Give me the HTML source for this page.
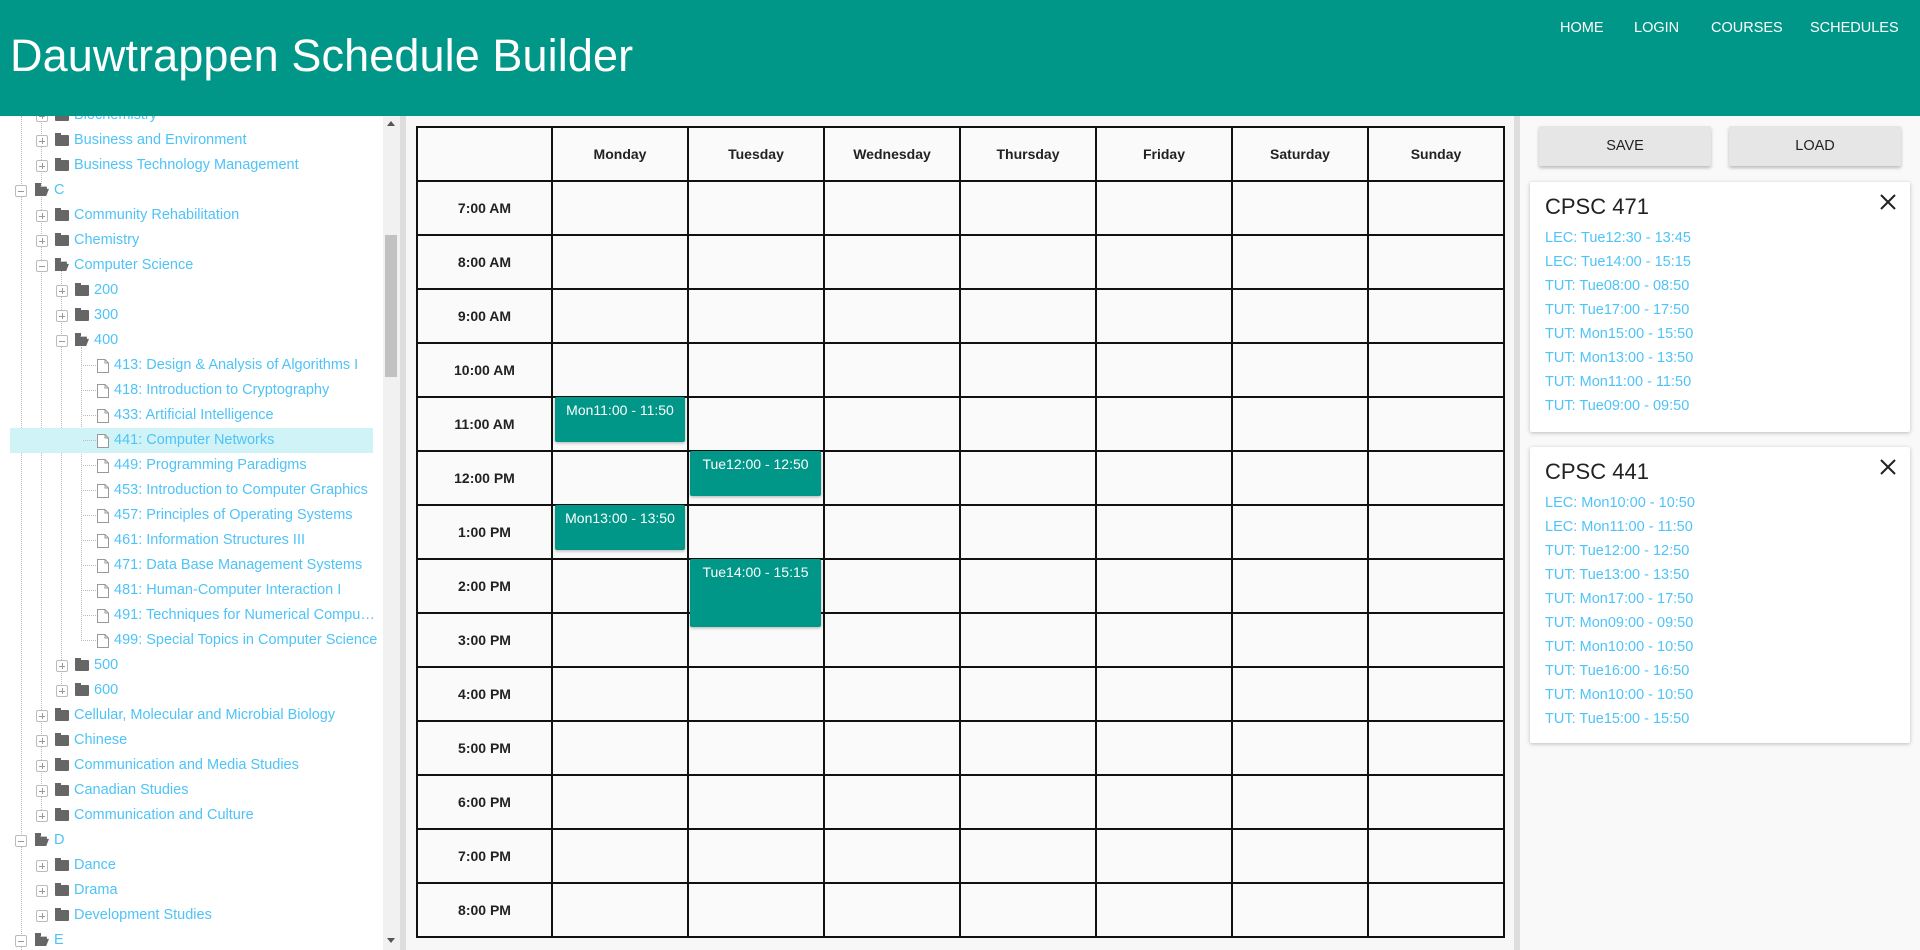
<!DOCTYPE html>
<html><head><meta charset="utf-8">
<style>
*{box-sizing:border-box;margin:0;padding:0}
body{width:1920px;height:950px;overflow:hidden;font-family:"Liberation Sans",sans-serif;background:#fafafa;position:relative}
.hdr{position:absolute;left:0;top:0;width:1920px;height:116px;background:#009688;z-index:5}
.hdr h1{position:absolute;left:10px;top:30px;font-weight:400;font-size:45px;color:#fff;letter-spacing:0.1px}
.nav a{position:absolute;top:20px;color:#fff;font-size:14.5px;text-decoration:none}
.side{position:absolute;left:0;top:116px;width:400px;height:834px;background:#fff;overflow:hidden}
.sb{position:absolute;left:383px;top:116px;width:17px;height:834px;background:#f1f1f1}
.thumb{position:absolute;left:385px;top:235px;width:12px;height:142px;background:#c1c1c1}
.row{position:absolute;height:25px;line-height:25px;font-size:14.5px;color:#4fc3f7;white-space:nowrap}
.exp{position:absolute;top:7px;width:12px;height:12px;border:1px solid #bbb;border-radius:2px;background:#fff}
.exp:before{content:"";position:absolute;left:2px;top:4.5px;width:6px;height:1px;background:#999}
.exp.p:after{content:"";position:absolute;left:4.5px;top:2px;width:1px;height:6px;background:#999}
.fold{position:absolute;top:7px;width:14px;height:11px;background:#666;border-radius:1px}
.fold:before{content:"";position:absolute;left:0;top:-2px;width:6px;height:3px;background:#666}
.fold.o{background:none}
.fold.o:after{content:"";position:absolute;left:0;top:0;width:14px;height:11px;background:#666;clip-path:polygon(0 0,40% 0,40% 15%,85% 15%,85% 35%,25% 35%,0 100%,0 0,25% 35%,100% 35%,80% 100%,0 100%)}
.file{position:absolute;top:6px;width:12px;height:14px}
.vl{position:absolute;border-left:1px dotted #bbb;width:0}
.hl{position:absolute;border-top:1px dotted #bbb;height:0;width:13px}
.div1{position:absolute;left:400px;top:116px;width:6px;height:834px;background:#ddd}
.div2{position:absolute;left:1514px;top:116px;width:6px;height:834px;background:#ddd}
.main{position:absolute;left:406px;top:116px;width:1108px;height:834px;background:#f7f7f7}
table{position:absolute;left:416px;top:126px;border-collapse:collapse;background:#fafafa}
td{border:2px solid #111;width:136px;height:54px;text-align:center;font-weight:bold;font-size:14px;color:#222}
td.t{width:135px}
.ev{position:absolute;background:#009688;color:#fff;font-size:14px;text-align:center;padding-top:5px;border-radius:2px;box-shadow:0 1px 3px rgba(0,0,0,.3)}
.rp{position:absolute;left:1520px;top:116px;width:400px;height:834px;background:#f9f9f9}
.btn{position:absolute;top:126px;width:172px;height:40px;background:#e6e6e6;border-radius:2px;box-shadow:0 2px 3px rgba(0,0,0,.25);text-align:center;line-height:40px;font-size:14.5px;color:#222}
.card{position:absolute;left:1530px;width:380px;background:#fff;box-shadow:0 1px 4px rgba(0,0,0,.25);border-radius:2px}
.card h2{position:absolute;left:15px;top:12px;font-weight:400;font-size:22px;color:#222}
.card .x{position:absolute;right:14px;top:12px;width:16px;height:16px}
.card .l{position:absolute;left:15px;font-size:14.5px;color:#4fc3f7}
</style></head><body>
<svg width="0" height="0" style="position:absolute"><defs><symbol id="fi" viewBox="0 0 12 14"><path d="M0.5 0.5H8L11.5 4V13.5H0.5Z M8 0.5V4H11.5" fill="#fff" stroke="#999" stroke-width="1"/></symbol><symbol id="fx" viewBox="0 0 16 16"><path d="M1 1L15 15M15 1L1 15" stroke="#222" stroke-width="2"/></symbol></defs></svg>
<div class="hdr"><h1>Dauwtrappen Schedule Builder</h1>
<div class="nav"><a style="left:1560px">HOME</a><a style="left:1634px">LOGIN</a><a style="left:1711px">COURSES</a><a style="left:1810px">SCHEDULES</a></div></div>

<div class="side">
<div class="vl" style="left:21px;top:0;height:834px"></div>
<div class="vl" style="left:41px;top:0;height:700px"></div>
<div class="vl" style="left:61px;top:155px;height:419px"></div>
<div class="vl" style="left:81px;top:231px;height:294px"></div>
<div style="position:absolute;left:10px;top:312px;width:363px;height:25px;background:#d0f3f8"></div>
</div>
<div id="tree" style="position:absolute;left:0;top:0;width:383px;height:950px;overflow:hidden;z-index:1">
<div class="row" style="top:103px"><span class="exp p" style="left:36px"></span><span class="fold" style="left:55px"></span><span style="position:absolute;left:74px">Biochemistry</span></div>
<div class="row" style="top:128px"><span class="exp p" style="left:36px"></span><span class="fold" style="left:55px"></span><span style="position:absolute;left:74px">Business and Environment</span></div>
<div class="row" style="top:153px"><span class="exp p" style="left:36px"></span><span class="fold" style="left:55px"></span><span style="position:absolute;left:74px">Business Technology Management</span></div>
<div class="row" style="top:178px"><span class="exp" style="left:15px"></span><span class="fold o" style="left:35px"></span><span style="position:absolute;left:54px">C</span></div>
<div class="row" style="top:203px"><span class="exp p" style="left:36px"></span><span class="fold" style="left:55px"></span><span style="position:absolute;left:74px">Community Rehabilitation</span></div>
<div class="row" style="top:228px"><span class="exp p" style="left:36px"></span><span class="fold" style="left:55px"></span><span style="position:absolute;left:74px">Chemistry</span></div>
<div class="row" style="top:253px"><span class="exp" style="left:36px"></span><span class="fold o" style="left:55px"></span><span style="position:absolute;left:74px">Computer Science</span></div>
<div class="row" style="top:278px"><span class="exp p" style="left:56px"></span><span class="fold" style="left:75px"></span><span style="position:absolute;left:94px">200</span></div>
<div class="row" style="top:303px"><span class="exp p" style="left:56px"></span><span class="fold" style="left:75px"></span><span style="position:absolute;left:94px">300</span></div>
<div class="row" style="top:328px"><span class="exp" style="left:56px"></span><span class="fold o" style="left:75px"></span><span style="position:absolute;left:94px">400</span></div>
<div class="row" style="top:353px"><span class="hl" style="left:83px;top:12px"></span><svg class="file" style="left:97px"><use href="#fi"/></svg><span style="position:absolute;left:114px">413: Design &amp; Analysis of Algorithms I</span></div>
<div class="row" style="top:378px"><span class="hl" style="left:83px;top:12px"></span><svg class="file" style="left:97px"><use href="#fi"/></svg><span style="position:absolute;left:114px">418: Introduction to Cryptography</span></div>
<div class="row" style="top:403px"><span class="hl" style="left:83px;top:12px"></span><svg class="file" style="left:97px"><use href="#fi"/></svg><span style="position:absolute;left:114px">433: Artificial Intelligence</span></div>
<div class="row" style="top:428px"><span class="hl" style="left:83px;top:12px"></span><svg class="file" style="left:97px"><use href="#fi"/></svg><span style="position:absolute;left:114px">441: Computer Networks</span></div>
<div class="row" style="top:453px"><span class="hl" style="left:83px;top:12px"></span><svg class="file" style="left:97px"><use href="#fi"/></svg><span style="position:absolute;left:114px">449: Programming Paradigms</span></div>
<div class="row" style="top:478px"><span class="hl" style="left:83px;top:12px"></span><svg class="file" style="left:97px"><use href="#fi"/></svg><span style="position:absolute;left:114px">453: Introduction to Computer Graphics</span></div>
<div class="row" style="top:503px"><span class="hl" style="left:83px;top:12px"></span><svg class="file" style="left:97px"><use href="#fi"/></svg><span style="position:absolute;left:114px">457: Principles of Operating Systems</span></div>
<div class="row" style="top:528px"><span class="hl" style="left:83px;top:12px"></span><svg class="file" style="left:97px"><use href="#fi"/></svg><span style="position:absolute;left:114px">461: Information Structures III</span></div>
<div class="row" style="top:553px"><span class="hl" style="left:83px;top:12px"></span><svg class="file" style="left:97px"><use href="#fi"/></svg><span style="position:absolute;left:114px">471: Data Base Management Systems</span></div>
<div class="row" style="top:578px"><span class="hl" style="left:83px;top:12px"></span><svg class="file" style="left:97px"><use href="#fi"/></svg><span style="position:absolute;left:114px">481: Human-Computer Interaction I</span></div>
<div class="row" style="top:603px"><span class="hl" style="left:83px;top:12px"></span><svg class="file" style="left:97px"><use href="#fi"/></svg><span style="position:absolute;left:114px">491: Techniques for Numerical Compu…</span></div>
<div class="row" style="top:628px"><span class="hl" style="left:83px;top:12px"></span><svg class="file" style="left:97px"><use href="#fi"/></svg><span style="position:absolute;left:114px">499: Special Topics in Computer Science</span></div>
<div class="row" style="top:653px"><span class="exp p" style="left:56px"></span><span class="fold" style="left:75px"></span><span style="position:absolute;left:94px">500</span></div>
<div class="row" style="top:678px"><span class="exp p" style="left:56px"></span><span class="fold" style="left:75px"></span><span style="position:absolute;left:94px">600</span></div>
<div class="row" style="top:703px"><span class="exp p" style="left:36px"></span><span class="fold" style="left:55px"></span><span style="position:absolute;left:74px">Cellular, Molecular and Microbial Biology</span></div>
<div class="row" style="top:728px"><span class="exp p" style="left:36px"></span><span class="fold" style="left:55px"></span><span style="position:absolute;left:74px">Chinese</span></div>
<div class="row" style="top:753px"><span class="exp p" style="left:36px"></span><span class="fold" style="left:55px"></span><span style="position:absolute;left:74px">Communication and Media Studies</span></div>
<div class="row" style="top:778px"><span class="exp p" style="left:36px"></span><span class="fold" style="left:55px"></span><span style="position:absolute;left:74px">Canadian Studies</span></div>
<div class="row" style="top:803px"><span class="exp p" style="left:36px"></span><span class="fold" style="left:55px"></span><span style="position:absolute;left:74px">Communication and Culture</span></div>
<div class="row" style="top:828px"><span class="exp" style="left:15px"></span><span class="fold o" style="left:35px"></span><span style="position:absolute;left:54px">D</span></div>
<div class="row" style="top:853px"><span class="exp p" style="left:36px"></span><span class="fold" style="left:55px"></span><span style="position:absolute;left:74px">Dance</span></div>
<div class="row" style="top:878px"><span class="exp p" style="left:36px"></span><span class="fold" style="left:55px"></span><span style="position:absolute;left:74px">Drama</span></div>
<div class="row" style="top:903px"><span class="exp p" style="left:36px"></span><span class="fold" style="left:55px"></span><span style="position:absolute;left:74px">Development Studies</span></div>
<div class="row" style="top:928px"><span class="exp" style="left:15px"></span><span class="fold o" style="left:35px"></span><span style="position:absolute;left:54px">E</span></div>
</div>
<div class="sb" style="z-index:2"></div><div class="thumb" style="z-index:2"></div>
<div style="position:absolute;left:387px;top:121px;width:0;height:0;border-left:4px solid transparent;border-right:4px solid transparent;border-bottom:5px solid #555;z-index:2"></div>
<div style="position:absolute;left:387px;top:938px;width:0;height:0;border-left:4px solid transparent;border-right:4px solid transparent;border-top:5px solid #555;z-index:2"></div>

<div class="div1"></div><div class="main"></div>
<table>
<tr><td class="t"></td><td>Monday</td><td>Tuesday</td><td>Wednesday</td><td>Thursday</td><td>Friday</td><td>Saturday</td><td>Sunday</td></tr>
<tr><td class="t">7:00 AM</td><td></td><td></td><td></td><td></td><td></td><td></td><td></td></tr>
<tr><td class="t">8:00 AM</td><td></td><td></td><td></td><td></td><td></td><td></td><td></td></tr>
<tr><td class="t">9:00 AM</td><td></td><td></td><td></td><td></td><td></td><td></td><td></td></tr>
<tr><td class="t">10:00 AM</td><td></td><td></td><td></td><td></td><td></td><td></td><td></td></tr>
<tr><td class="t">11:00 AM</td><td></td><td></td><td></td><td></td><td></td><td></td><td></td></tr>
<tr><td class="t">12:00 PM</td><td></td><td></td><td></td><td></td><td></td><td></td><td></td></tr>
<tr><td class="t">1:00 PM</td><td></td><td></td><td></td><td></td><td></td><td></td><td></td></tr>
<tr><td class="t">2:00 PM</td><td></td><td></td><td></td><td></td><td></td><td></td><td></td></tr>
<tr><td class="t">3:00 PM</td><td></td><td></td><td></td><td></td><td></td><td></td><td></td></tr>
<tr><td class="t">4:00 PM</td><td></td><td></td><td></td><td></td><td></td><td></td><td></td></tr>
<tr><td class="t">5:00 PM</td><td></td><td></td><td></td><td></td><td></td><td></td><td></td></tr>
<tr><td class="t">6:00 PM</td><td></td><td></td><td></td><td></td><td></td><td></td><td></td></tr>
<tr><td class="t">7:00 PM</td><td></td><td></td><td></td><td></td><td></td><td></td><td></td></tr>
<tr><td class="t">8:00 PM</td><td></td><td></td><td></td><td></td><td></td><td></td><td></td></tr>
</table>
<div class="ev" style="left:555px;top:397px;width:130px;height:45px">Mon11:00 - 11:50</div>
<div class="ev" style="left:555px;top:505px;width:130px;height:45px">Mon13:00 - 13:50</div>
<div class="ev" style="left:690px;top:451px;width:131px;height:45px">Tue12:00 - 12:50</div>
<div class="ev" style="left:690px;top:559px;width:131px;height:68px">Tue14:00 - 15:15</div>

<div class="div2"></div><div class="rp"></div>
<div class="btn" style="left:1539px">SAVE</div>
<div class="btn" style="left:1729px">LOAD</div>
<div class="card" style="top:182px;height:250px"><h2>CPSC 471</h2><svg class="x"><use href="#fx"/></svg>
<span class="l" style="top:48px">LEC: Tue12:30 - 13:45</span>
<span class="l" style="top:72px">LEC: Tue14:00 - 15:15</span>
<span class="l" style="top:96px">TUT: Tue08:00 - 08:50</span>
<span class="l" style="top:120px">TUT: Tue17:00 - 17:50</span>
<span class="l" style="top:144px">TUT: Mon15:00 - 15:50</span>
<span class="l" style="top:168px">TUT: Mon13:00 - 13:50</span>
<span class="l" style="top:192px">TUT: Mon11:00 - 11:50</span>
<span class="l" style="top:216px">TUT: Tue09:00 - 09:50</span>
</div>
<div class="card" style="top:447px;height:296px"><h2>CPSC 441</h2><svg class="x"><use href="#fx"/></svg>
<span class="l" style="top:48px">LEC: Mon10:00 - 10:50</span>
<span class="l" style="top:72px">LEC: Mon11:00 - 11:50</span>
<span class="l" style="top:96px">TUT: Tue12:00 - 12:50</span>
<span class="l" style="top:120px">TUT: Tue13:00 - 13:50</span>
<span class="l" style="top:144px">TUT: Mon17:00 - 17:50</span>
<span class="l" style="top:168px">TUT: Mon09:00 - 09:50</span>
<span class="l" style="top:192px">TUT: Mon10:00 - 10:50</span>
<span class="l" style="top:216px">TUT: Tue16:00 - 16:50</span>
<span class="l" style="top:240px">TUT: Mon10:00 - 10:50</span>
<span class="l" style="top:264px">TUT: Tue15:00 - 15:50</span>
</div>
</body></html>
